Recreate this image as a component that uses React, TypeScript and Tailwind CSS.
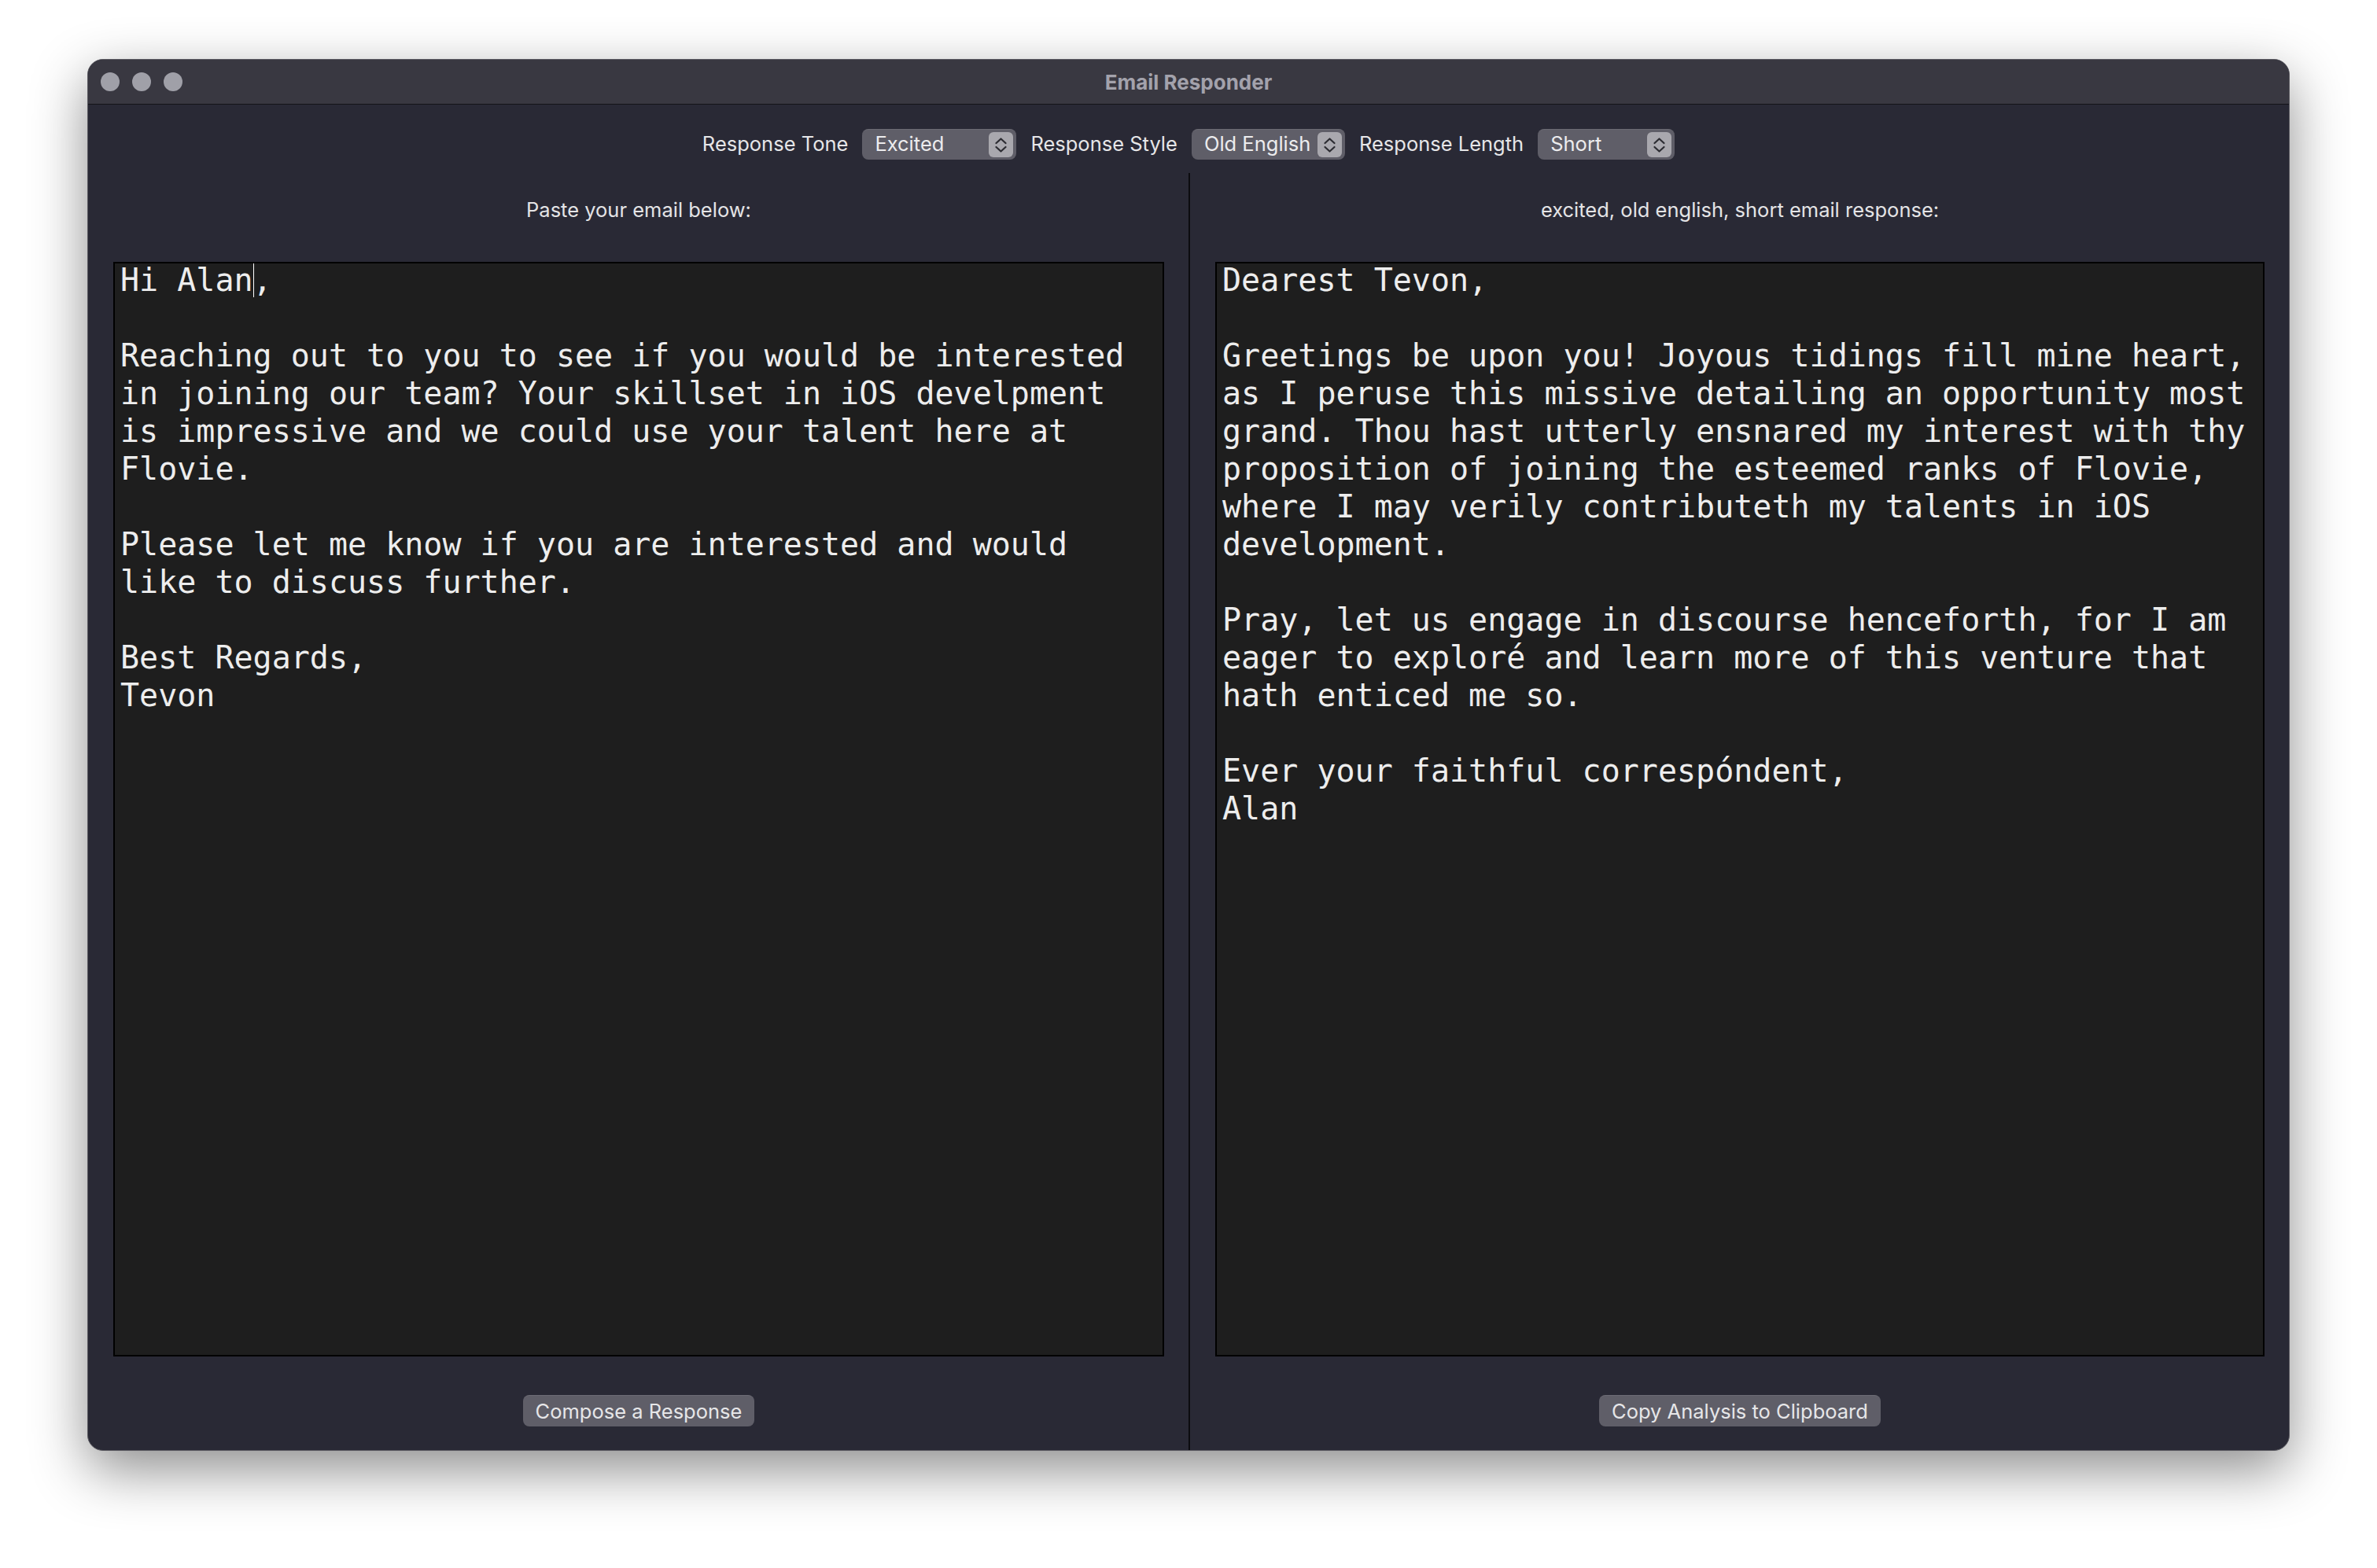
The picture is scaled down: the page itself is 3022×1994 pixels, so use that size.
import React from "react";

const emailBody = `Reaching out to you to see if you would be interested
in joining our team? Your skillset in iOS develpment
is impressive and we could use your talent here at
Flovie.

Please let me know if you are interested and would
like to discuss further.

Best Regards,
Tevon`;

const responseBody = `Dearest Tevon,

Greetings be upon you! Joyous tidings fill mine heart,
as I peruse this missive detailing an opportunity most
grand. Thou hast utterly ensnared my interest with thy
proposition of joining the esteemed ranks of Flovie,
where I may verily contributeth my talents in iOS
development.

Pray, let us engage in discourse henceforth, for I am
eager to exploré and learn more of this venture that
hath enticed me so.

Ever your faithful correspóndent,
Alan`;

function Stepper() {
  return (
    <div className="w-[31px] h-[32px] rounded-[6px] bg-[#a9a8ae] flex items-center justify-center shrink-0">
      <svg width="31" height="32" viewBox="0 0 31 32" fill="none">
        <path d="M9.5 14 L15.5 8.5 L21.5 14" stroke="#2c2c32" strokeWidth="2.2" strokeLinecap="round" strokeLinejoin="round" />
        <path d="M9.5 19 L15.5 24.5 L21.5 19" stroke="#2c2c32" strokeWidth="2.2" strokeLinecap="round" strokeLinejoin="round" />
      </svg>
    </div>
  );
}

function Popup({ value, width }: { value: string; width: string }) {
  return (
    <div className={`${width} h-[39px] rounded-[8px] bg-[#5f5e68] border-t border-[#6c6b74] flex items-center justify-between pl-4 pr-[4px]`}>
      <span className="text-[25.5px] leading-none text-[#ececee] -mt-[2px]">{value}</span>
      <Stepper />
    </div>
  );
}

function Pane({
  label,
  button,
  children,
}: {
  label: string;
  button: string;
  children: React.ReactNode;
}) {
  return (
    <div className="flex flex-col items-stretch pt-[32px] pb-[31px] pl-[32px] pr-[31px]">
      <div className="h-[31px] flex items-center justify-center text-[25.5px] text-[#e4e4e6]">{label}</div>
      <div className="mt-[50px] h-[1392px] bg-[#1e1e1e] border-2 border-black pl-[7px] overflow-hidden">
        <pre className="font-['DejaVu_Sans_Mono','Liberation_Mono',monospace] text-[40px] leading-[48px] text-[#ededed] whitespace-pre -mt-[3px]">
          {children}
        </pre>
      </div>
      <div className="mt-[49px] flex justify-center">
        <button className="h-[40px] px-4 rounded-[8px] bg-[#5f5e68] border-t border-[#6c6b74] text-[25.5px] leading-none text-[#e6e6e8]">
          {button}
        </button>
      </div>
    </div>
  );
}

export default function App() {
  return (
    <div className="w-[3022px] h-[1994px] bg-white flex justify-center pt-[75px] font-['Inter','Noto_Sans',sans-serif]">
      <div className="w-[2800px] h-[1770px] rounded-[20px] bg-[#292935] border border-[#5a5960] shadow-[0_24px_70px_rgba(0,0,0,0.45)] flex flex-col overflow-hidden">
        {/* Title bar */}
        <div className="relative h-[57px] shrink-0 bg-[#393841] border-b border-[#141418] flex items-center pl-[16px] gap-4">
          <div className="w-6 h-6 rounded-full bg-[#a0a0a8]" />
          <div className="w-6 h-6 rounded-full bg-[#a0a0a8]" />
          <div className="w-6 h-6 rounded-full bg-[#a0a0a8]" />
          <div className="absolute inset-0 flex items-center justify-center text-[26px] font-bold text-[#a3a2ac]">
            Email Responder
          </div>
        </div>

        {/* Options row */}
        <div className="mt-[31px] h-[39px] flex items-center justify-center gap-[18px] text-[25.5px] text-[#e6e6e8]">
          <span>Response Tone</span>
          <Popup value="Excited" width="w-[196px]" />
          <span>Response Style</span>
          <Popup value="Old English" width="w-[195px]" />
          <span>Response Length</span>
          <Popup value="Short" width="w-[174px]" />
        </div>

        {/* Panes */}
        <div className="mt-[17px] flex-1 grid grid-cols-2">
          <Pane label="Paste your email below:" button="Compose a Response">
            {"Hi Alan"}
            <span className="inline-block align-top w-0 h-[46px] border-l border-white -mr-px" />
            {",\n\n" + emailBody}
          </Pane>
          <div className="border-l-2 border-[#0c0c0f]">
            <Pane label="excited, old english, short email response:" button="Copy Analysis to Clipboard">
              {responseBody}
            </Pane>
          </div>
        </div>
      </div>
    </div>
  );
}
